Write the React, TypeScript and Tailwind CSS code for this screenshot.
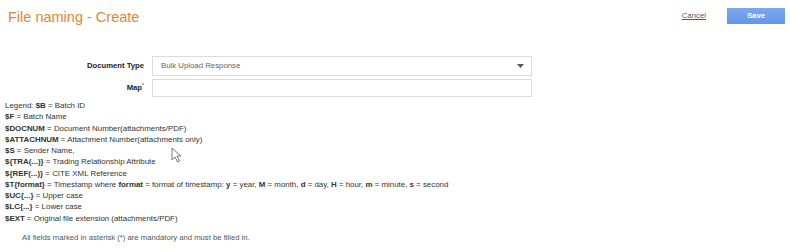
const legend: [string, string][] = [
  ["$F", " = Batch Name"],
  ["$DOCNUM", " = Document Number(attachments/PDF)"],
  ["$ATTACHNUM", " = Attachment Number(attachments only)"],
  ["$S", " = Sender Name,"],
  ["${TRA(...)}", " = Trading Relationship Attribute"],
  ["${REF(...)}", " = CITE XML Reference"],
];

const legendTail: [string, string][] = [
  ["$UC{...}", " = Upper case"],
  ["$LC{...}", " = Lower case"],
  ["$EXT", " = Original file extension (attachments/PDF)"],
];

function Cursor() {
  return (
    <svg className="absolute left-[171px] top-[147px]" width="11" height="16" viewBox="0 0 11 16">
      <path d="M1 1 L1 13 L4 10 L6.5 15 L8.5 14 L6 9 L10 9 Z" fill="#fff" stroke="#777" strokeWidth="1" strokeLinejoin="round" />
    </svg>
  );
}

export default function App() {
  return (
    <div className="relative w-[790px] h-[252px] bg-white font-['Liberation_Sans',Arial,sans-serif] text-[#333]">
      {/* header */}
      <div className="flex items-start justify-between pl-[8px] pr-[5px] pt-[8px]">
        <h1 className="text-[14.5px] leading-[18px] text-[#e8852e]">File naming - Create</h1>
        <div className="flex items-center gap-[21px]">
          <a className="text-[7.8px] text-[#555] underline">Cancel</a>
          <button className="h-[16px] w-[58px] bg-gradient-to-b from-[#7aa7ef] to-[#6495ea] text-[7.8px] font-bold text-white">
            Save
          </button>
        </div>
      </div>

      {/* form */}
      <div className="mt-[30px] flex flex-col gap-[3px]">
        <div className="flex items-center">
          <label className="w-[145px] pr-[1px] text-right text-[7.7px] font-bold text-[#222]">Document Type</label>
          <div className="ml-[7px] flex h-[20px] w-[380px] items-center justify-between border border-[#dcdcdc] pl-[8px] pr-[7px]">
            <span className="text-[7.8px] text-[#666]">Bulk Upload Response</span>
            <svg width="7" height="4" viewBox="0 0 7 4"><path d="M0 0 H7 L3.5 4 Z" fill="#555" /></svg>
          </div>
        </div>
        <div className="flex items-center">
          <label className="w-[145px] pr-[1px] text-right text-[7.7px] font-bold text-[#222]">
            Map<span className="align-top text-[5px] font-normal">*</span>
          </label>
          <div className="ml-[7px] h-[18px] w-[380px] border border-[#dcdcdc]" />
        </div>
      </div>

      {/* legend */}
      <div className="mt-[3px] pl-[5px] text-[7.9px] leading-[11.25px] text-[#333]">
        <div>
          Legend: <b>$B</b> = Batch ID
        </div>
        {legend.map(([k, v]) => (
          <div key={k}>
            <b>{k}</b>
            {v}
          </div>
        ))}
        <div>
          <b>{"$T{format}"}</b> = Timestamp where <b>format</b> = format of timestamp: <b>y</b> = year, <b>M</b> = month,{" "}
          <b>d</b> = day, <b>H</b> = hour, <b>m</b> = minute, <b>s</b> = second
        </div>
        {legendTail.map(([k, v]) => (
          <div key={k}>
            <b>{k}</b>
            {v}
          </div>
        ))}
      </div>

      <p className="mt-[8px] pl-[22px] text-[7.7px] leading-[11px] text-[#555]">
        All fields marked in asterisk (*) are mandatory and must be filled in.
      </p>

      <Cursor />
    </div>
  );
}
